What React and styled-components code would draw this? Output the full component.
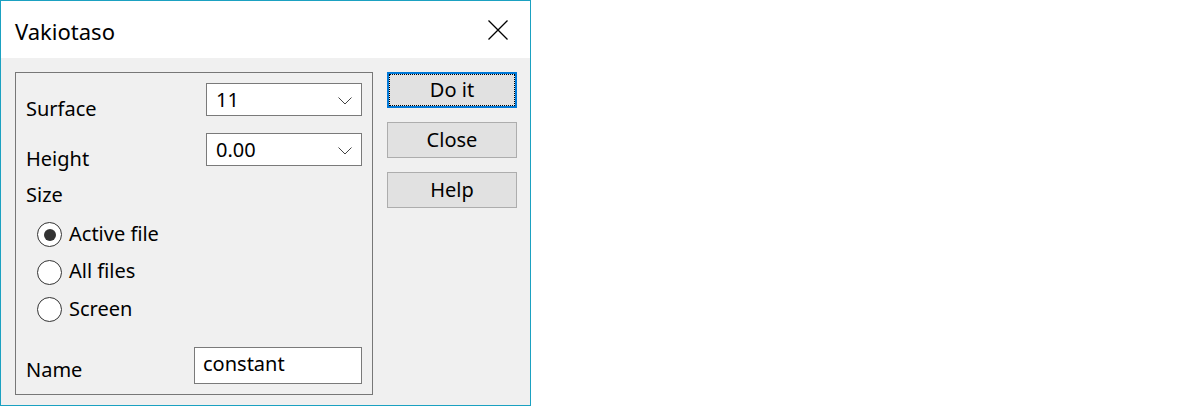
import React, { useState } from 'react';
import styled, { createGlobalStyle } from 'styled-components';

const GlobalStyle = createGlobalStyle`
  body {
    margin: 0;
    background: #ffffff;
    font-family: "Noto Sans", "Open Sans", sans-serif;
  }
`;

const Window = styled.div`
  width: 531px;
  height: 406px;
  box-sizing: border-box;
  border: 1px solid #1ba1c1;
  display: flex;
  flex-direction: column;
  background: #f0f0f0;
  color: #000;
`;

const TitleBar = styled.div`
  height: 57px;
  flex: none;
  background: #ffffff;
  display: flex;
  align-items: center;
  justify-content: space-between;
  padding: 0 22px 0 14px;
`;

const Title = styled.span`
  font-size: 22px;
  line-height: 26px;
  margin-top: 2px;
`;

const CloseIcon = styled.svg`
  width: 20px;
  height: 20px;
  display: block;
`;

const Body = styled.div`
  flex: 1;
  display: flex;
  align-items: flex-start;
  gap: 14px;
  padding: 14px 13px 10px 14px;
`;

const GroupBox = styled.div`
  width: 358px;
  height: 323px;
  box-sizing: border-box;
  border: 1px solid #777;
  padding: 10px;
  display: flex;
  flex-direction: column;
`;

const FieldRow = styled.div`
  display: flex;
  justify-content: space-between;
  align-items: flex-start;
  height: 33px;
  margin-bottom: ${p => p.$gap || 0}px;
`;

const Label = styled.span`
  font-size: 20px;
  line-height: 24px;
  padding-top: 14px;
`;

const Combo = styled.div`
  width: 156px;
  height: 33px;
  box-sizing: border-box;
  border: 1px solid #7a7a7a;
  background: #fff;
  display: flex;
  align-items: center;
  justify-content: space-between;
  padding: 0 9px 0 9px;
  font-size: 20px;
  line-height: 24px;
`;

const Chevron = styled.svg`
  width: 14px;
  height: 8px;
  display: block;
  margin-top: 3px;
`;

const SectionLabel = styled.span`
  font-size: 20px;
  line-height: 24px;
  margin-top: 17px;
`;

const RadioList = styled.div`
  display: flex;
  flex-direction: column;
  padding-left: 11px;
  margin-top: 8px;
`;

const RadioRow = styled.label`
  display: flex;
  align-items: center;
  height: 37.5px;
  gap: 7px;
  font-size: 20px;
  line-height: 24px;
  cursor: default;
`;

const RadioCircle = styled.span`
  width: 25px;
  height: 25px;
  box-sizing: border-box;
  border: 1px solid #333;
  border-radius: 50%;
  background: #fff;
  display: flex;
  align-items: center;
  justify-content: center;
  margin-top: 2px;

  &::after {
    content: '';
    width: 12px;
    height: 12px;
    border-radius: 50%;
    background: ${p => (p.$checked ? '#333' : 'transparent')};
  }
`;

const NameRow = styled.div`
  margin-top: auto;
  display: flex;
  justify-content: space-between;
  align-items: flex-end;
`;

const NameLabel = styled.span`
  font-size: 20px;
  line-height: 24px;
  padding-bottom: 2px;
`;

const TextInput = styled.input`
  width: 168px;
  height: 37px;
  box-sizing: border-box;
  border: 1px solid #7a7a7a;
  background: #fff;
  padding: 0 8px 5px 8px;
  font-family: inherit;
  font-size: 20px;
  color: #000;
  outline: none;
`;

const ButtonColumn = styled.div`
  display: flex;
  flex-direction: column;
  gap: 14px;
`;

const Button = styled.button`
  width: 130px;
  height: 36px;
  box-sizing: border-box;
  background: #e1e1e1;
  border: ${p => (p.$default ? '2px solid #0078d7' : '1px solid #adadad')};
  outline: ${p => (p.$default ? '1px dotted #000' : 'none')};
  outline-offset: -3px;
  font-family: inherit;
  font-size: 20px;
  line-height: 24px;
  color: #000;
  padding: 0;
`;

const sizes = ['Active file', 'All files', 'Screen'];

function App() {
  const [size, setSize] = useState('Active file');
  const [name, setName] = useState('constant');

  return (
    <>
      <GlobalStyle />
      <Window>
        <TitleBar>
          <Title>Vakiotaso</Title>
          <CloseIcon viewBox="0 0 20 20">
            <path d="M0.5 0.5 L19.5 19.5 M19.5 0.5 L0.5 19.5" stroke="#000" strokeWidth="1.3" fill="none" />
          </CloseIcon>
        </TitleBar>
        <Body>
          <GroupBox>
            <FieldRow $gap={17}>
              <Label>Surface</Label>
              <Combo>
                <span>11</span>
                <Chevron viewBox="0 0 14 8">
                  <path d="M0.5 0.5 L7 7 L13.5 0.5" stroke="#444" strokeWidth="1" fill="none" />
                </Chevron>
              </Combo>
            </FieldRow>
            <FieldRow>
              <Label>Height</Label>
              <Combo>
                <span>0.00</span>
                <Chevron viewBox="0 0 14 8">
                  <path d="M0.5 0.5 L7 7 L13.5 0.5" stroke="#444" strokeWidth="1" fill="none" />
                </Chevron>
              </Combo>
            </FieldRow>
            <SectionLabel>Size</SectionLabel>
            <RadioList>
              {sizes.map(s => (
                <RadioRow key={s} onClick={() => setSize(s)}>
                  <RadioCircle $checked={size === s} />
                  {s}
                </RadioRow>
              ))}
            </RadioList>
            <NameRow>
              <NameLabel>Name</NameLabel>
              <TextInput value={name} onChange={e => setName(e.target.value)} />
            </NameRow>
          </GroupBox>
          <ButtonColumn>
            <Button $default>Do it</Button>
            <Button>Close</Button>
            <Button>Help</Button>
          </ButtonColumn>
        </Body>
      </Window>
    </>
  );
}

export default App;
